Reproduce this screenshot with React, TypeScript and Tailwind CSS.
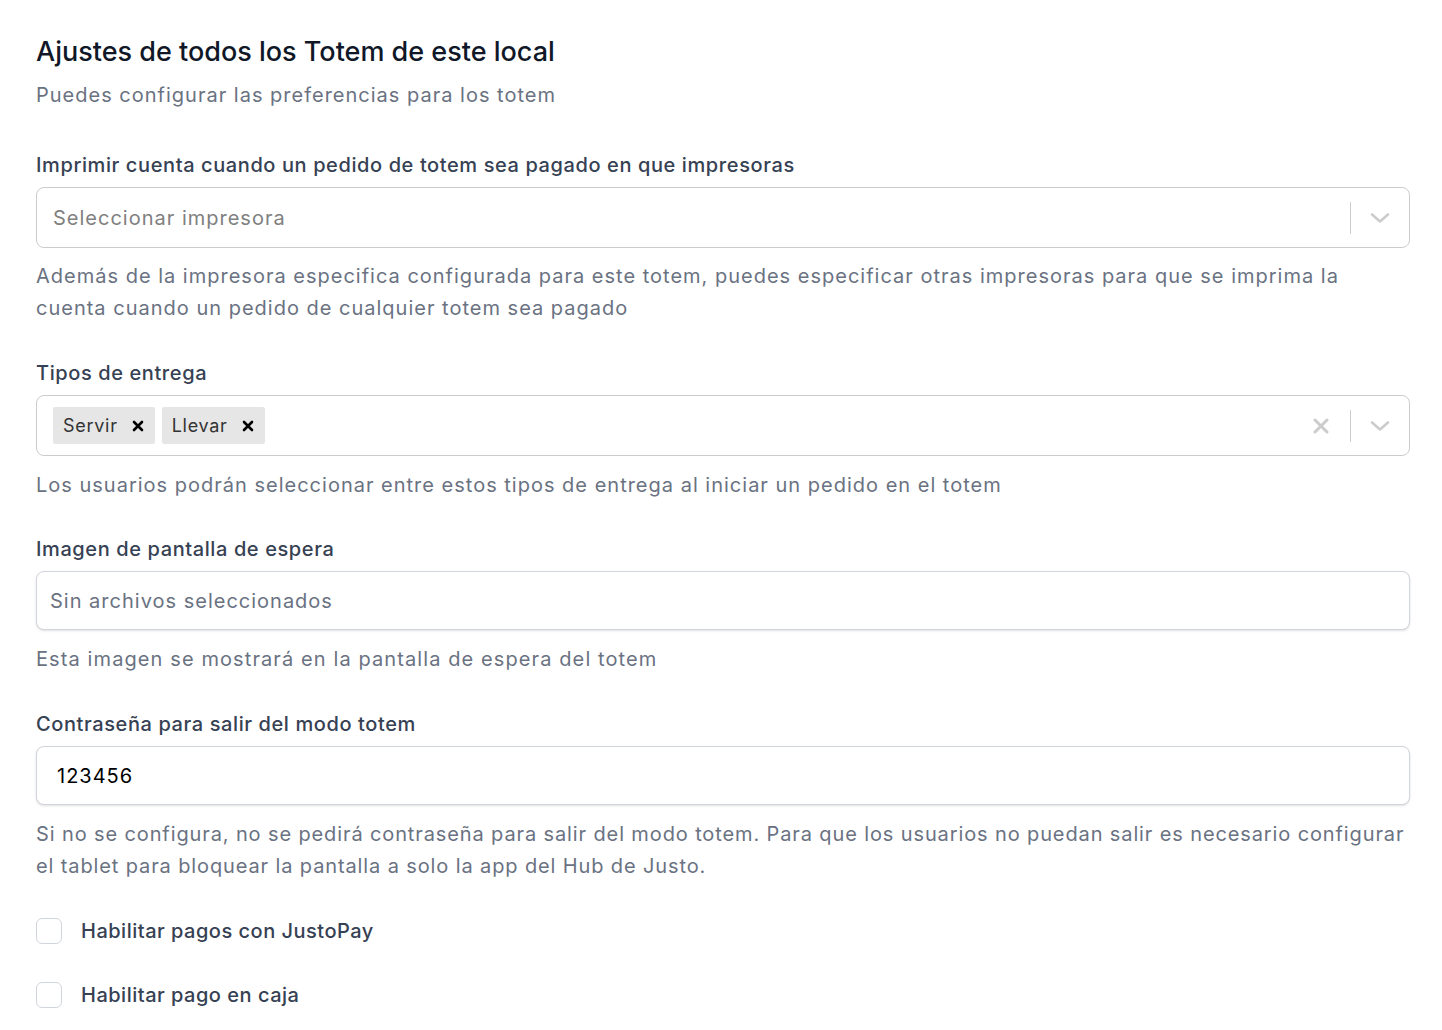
import React from 'react';

const font = { fontFamily: 'Inter, "Noto Sans", sans-serif' };

function Chevron() {
  return (
    <svg width="20" height="20" viewBox="0 0 20 20" fill="none" className="stroke-[#cccccc]">
      <path d="M2 6.5 L10 13.5 L18 6.5" strokeWidth="2.6" strokeLinecap="round" strokeLinejoin="round" />
    </svg>
  );
}

function ClearX() {
  return (
    <svg width="16" height="16" viewBox="0 0 16 16" fill="none" className="stroke-[#cccccc]">
      <path d="M2 2 L14 14 M14 2 L2 14" strokeWidth="3" strokeLinecap="round" />
    </svg>
  );
}

function ChipX() {
  return (
    <svg width="12" height="12" viewBox="0 0 12 12" fill="none" className="stroke-black">
      <path d="M2 2 L10 10 M10 2 L2 10" strokeWidth="2.6" strokeLinecap="round" />
    </svg>
  );
}

function Label({ children }: { children: React.ReactNode }) {
  return <div className="text-[20px] leading-[28px] font-medium text-gray-700 tracking-[0.03em]">{children}</div>;
}

function Help({ children, className = 'mt-[12px] tracking-[0.05em]' }: { children: React.ReactNode; className?: string }) {
  return <p className={`${className} text-[20px] leading-[32px] text-gray-500`}>{children}</p>;
}

function Chip({ text }: { text: string }) {
  return (
    <div className="flex items-center h-[37px] rounded-[2px] bg-[#e6e6e6]">
      <span className="pl-[10px] pr-[6px] text-[18px] text-[#333333] tracking-[0.04em]">{text}</span>
      <span className="pl-[8px] pr-[11px] flex items-center">
        <ChipX />
      </span>
    </div>
  );
}

function Check({ text }: { text: string }) {
  return (
    <label className="flex items-center gap-[19px]">
      <span className="w-[26px] h-[26px] rounded-[6px] border border-gray-300 bg-white shrink-0" />
      <span className="text-[20px] leading-[28px] font-medium text-gray-700 tracking-[0.025em]">{text}</span>
    </label>
  );
}

export default function App() {
  return (
    <div className="min-h-screen bg-white pl-[36px] pr-[32px] pt-[34px] pb-[20px]" style={font}>
      <h1 className="text-[27px] leading-[36px] font-medium text-gray-900">Ajustes de todos los Totem de este local</h1>
      <p className="mt-[9px] text-[20px] leading-[32px] text-gray-500 tracking-[0.05em]">Puedes configurar las preferencias para los totem</p>

      <div className="mt-[40px]">
        <Label>Imprimir cuenta cuando un pedido de totem sea pagado en que impresoras</Label>
        <div className="mt-[8px] flex items-center h-[61px] rounded-[8px] border border-[#cccccc] bg-white">
          <div className="flex-1 pl-[16px] text-[20px] text-[#808080] tracking-[0.05em]">Seleccionar impresora</div>
          <div className="w-px h-[32px] bg-[#cccccc]" />
          <div className="px-[19px] flex items-center"><Chevron /></div>
        </div>
        <Help>
          Además de la impresora especifica configurada para este totem, puedes especificar otras impresoras para que se imprima la cuenta cuando un pedido de cualquier totem sea pagado
        </Help>
      </div>

      <div className="mt-[35px]">
        <Label>Tipos de entrega</Label>
        <div className="mt-[8px] flex items-center h-[61px] rounded-[8px] border border-[#cccccc] bg-white">
          <div className="flex-1 flex items-center gap-[7px] pl-[16px]">
            <Chip text="Servir" />
            <Chip text="Llevar" />
          </div>
          <div className="px-[21px] flex items-center"><ClearX /></div>
          <div className="w-px h-[32px] bg-[#cccccc]" />
          <div className="px-[19px] flex items-center"><Chevron /></div>
        </div>
        <Help className="mt-[13px] tracking-[0.05em]">Los usuarios podrán seleccionar entre estos tipos de entrega al iniciar un pedido en el totem</Help>
      </div>

      <div className="mt-[34px]">
        <Label>Imagen de pantalla de espera</Label>
        <div className="mt-[8px] flex items-center h-[59px] rounded-[8px] border border-gray-300 bg-white shadow-sm">
          <span className="pl-[13px] text-[20px] text-gray-500 tracking-[0.05em]">Sin archivos seleccionados</span>
        </div>
        <Help className="mt-[13px] tracking-[0.055em]">Esta imagen se mostrará en la pantalla de espera del totem</Help>
      </div>

      <div className="mt-[35px]">
        <Label>Contraseña para salir del modo totem</Label>
        <div className="mt-[8px] flex items-center h-[59px] rounded-[8px] border border-gray-300 bg-white shadow-sm">
          <span className="pl-[20px] text-[20px] text-black tracking-[0.05em]">123456</span>
        </div>
        <Help className="mt-[13px] tracking-[0.044em]">
          Si no se configura, no se pedirá contraseña para salir del modo totem. Para que los usuarios no puedan salir es necesario configurar el tablet para bloquear la pantalla a solo la app del Hub de Justo.
        </Help>
      </div>

      <div className="mt-[35px] flex flex-col gap-[36px]">
        <Check text="Habilitar pagos con JustoPay" />
        <Check text="Habilitar pago en caja" />
      </div>
    </div>
  );
}
